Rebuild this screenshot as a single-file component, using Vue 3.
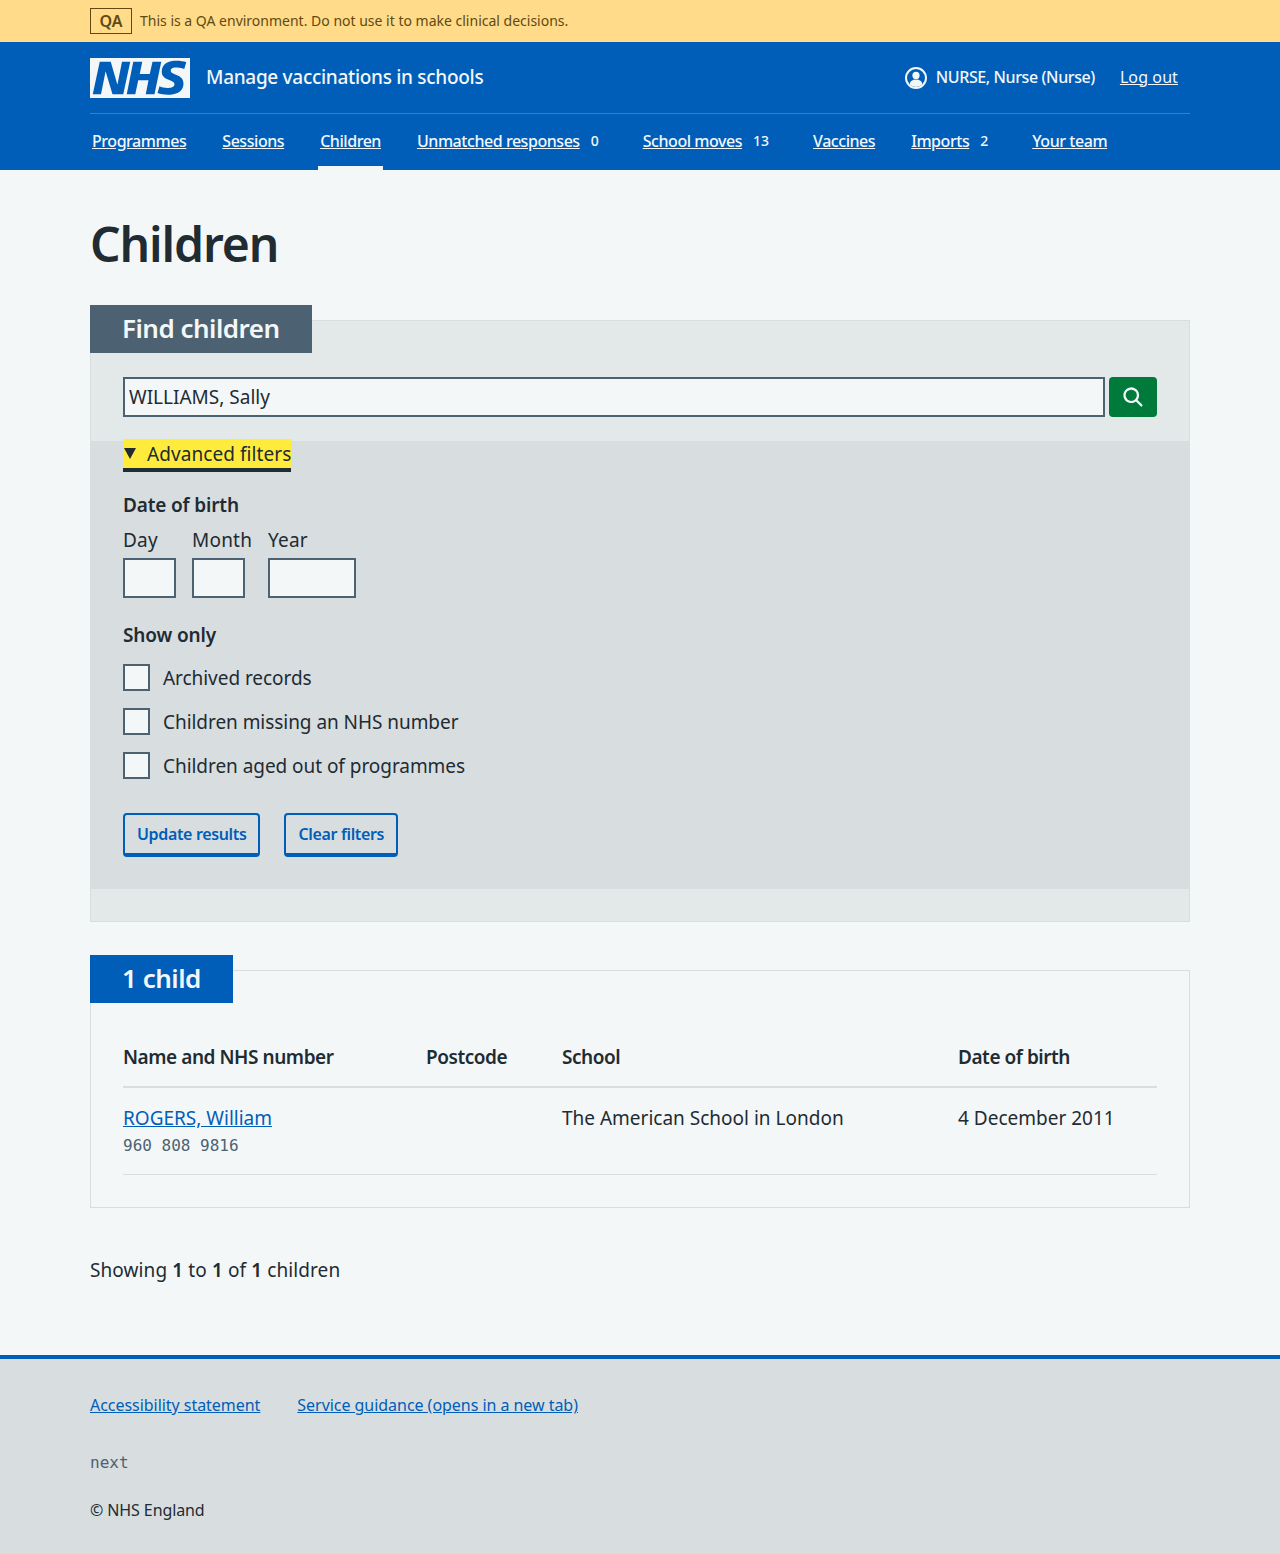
<script setup>
const navItems = [
  { label: 'Programmes' },
  { label: 'Sessions' },
  { label: 'Children', active: true },
  { label: 'Unmatched responses', count: 0 },
  { label: 'School moves', count: 13 },
  { label: 'Vaccines' },
  { label: 'Imports', count: 2 },
  { label: 'Your team' }
]

const dateParts = [
  { label: 'Day', kind: 'short' },
  { label: 'Month', kind: 'short' },
  { label: 'Year', kind: 'long' }
]

const showOnly = [
  'Archived records',
  'Children missing an NHS number',
  'Children aged out of programmes'
]
</script>

<template>
  <div class="page">
    <div class="env-banner">
      <div class="container env-inner">
        <strong class="env-tag">QA</strong>
        <span>This is a QA environment. Do not use it to make clinical decisions.</span>
      </div>
    </div>

    <header class="header">
      <div class="container">
        <div class="header-top">
          <a class="brand" href="#">
            <svg class="logo" viewBox="0 0 40 16" width="100" height="40" aria-label="NHS">
              <path fill="#f4f7f8" d="M0 0h40v16H0z" />
              <path fill="#005eb8" d="M3.9 1.5h4.4l2.6 9h.1l1.8-9h3.3l-2.8 13H9l-2.7-9h-.1l-1.8 9H1.1M17.3 1.5h3.6l-1 4.9h4L25 1.5h3.5l-2.7 13h-3.5l1.1-5.6h-4.1l-1.2 5.6h-3.4M37.7 4.4c-.7-.3-1.6-.6-2.9-.6-1.4 0-2.5.2-2.5 1.3 0 1.8 5.1 1.2 5.1 5.1 0 3.6-3.3 4.5-6.4 4.5-1.3 0-2.9-.3-4-.7l.8-2.7c.7.4 2.1.7 3.2.7s2.8-.2 2.8-1.5c0-2.1-5.1-1.3-5.1-5 0-3.4 2.9-4.4 5.8-4.4 1.6 0 3.1.2 4 .6" />
            </svg>
            <span class="service-name">Manage vaccinations in schools</span>
          </a>
          <div class="account">
            <svg class="account-icon" viewBox="0 0 22 22" width="22" height="22" aria-hidden="true">
              <circle cx="11" cy="11" r="10" fill="none" stroke="#f4f7f8" stroke-width="2" />
              <circle cx="11" cy="8.4" r="3.6" fill="#f4f7f8" />
              <path fill="#f4f7f8" d="M4.6 17.2c.6-3.2 2.7-4.7 6.4-4.7s5.8 1.5 6.4 4.7A9 9 0 0 1 11 20a9 9 0 0 1-6.4-2.8z" />
            </svg>
            <span class="account-name">NURSE, Nurse (Nurse)</span>
            <a class="logout" href="#">Log out</a>
          </div>
        </div>
        <nav class="nav">
          <div
            v-for="item in navItems"
            :key="item.label"
            class="nav-item"
            :class="{ active: item.active }"
          >
            <a href="#">{{ item.label }}</a>
            <span v-if="item.count !== undefined" class="nav-count">{{ item.count }}</span>
          </div>
        </nav>
      </div>
    </header>

    <main class="container main">
      <h1 class="title">Children</h1>

      <section class="card filter-card">
        <h2 class="card-heading filter-heading">Find children</h2>
        <div class="search-row">
          <input class="text-input search-input" type="text" value="WILLIAMS, Sally" />
          <button class="search-btn" type="button" aria-label="Search">
            <svg viewBox="0 0 24 24" width="27" height="27" aria-hidden="true">
              <path fill="#f4f7f8" d="M19.71 18.29l-4.11-4.1a7 7 0 1 0-1.41 1.41l4.1 4.11a1 1 0 0 0 1.42 0 1 1 0 0 0 0-1.42zM5 10a5 5 0 1 1 5 5 5 5 0 0 1-5-5z" />
            </svg>
          </button>
        </div>

        <details class="advanced" open>
          <summary class="advanced-summary">
            <span class="summary-inner">
              <span class="summary-arrow"></span>
              <span class="summary-text">Advanced filters</span>
            </span>
          </summary>
          <div class="advanced-body">
            <div class="field-title">Date of birth</div>
            <div class="date-row">
              <label v-for="part in dateParts" :key="part.label" class="date-part">
                <span class="date-label">{{ part.label }}</span>
                <input class="text-input" :class="part.kind" type="text" />
              </label>
            </div>

            <div class="field-title show-title">Show only</div>
            <div class="checks">
              <label v-for="opt in showOnly" :key="opt" class="check-row">
                <span class="check-box"></span>
                <span class="check-text">{{ opt }}</span>
              </label>
            </div>

            <div class="actions">
              <button class="secondary-btn" type="button">Update results</button>
              <button class="secondary-btn" type="button">Clear filters</button>
            </div>
          </div>
        </details>
      </section>

      <section class="card results-card">
        <h2 class="card-heading results-heading">1 child</h2>
        <table class="table">
          <thead>
            <tr>
              <th class="col-name">Name and NHS number</th>
              <th class="col-postcode">Postcode</th>
              <th class="col-school">School</th>
              <th>Date of birth</th>
            </tr>
          </thead>
          <tbody>
            <tr>
              <td>
                <a class="child-link" href="#">ROGERS, William</a>
                <div class="nhs-number">960 808 9816</div>
              </td>
              <td></td>
              <td>The American School in London</td>
              <td>4 December 2011</td>
            </tr>
          </tbody>
        </table>
      </section>

      <p class="showing">Showing <b>1</b> to <b>1</b> of <b>1</b> children</p>
    </main>

    <footer class="footer">
      <div class="container">
        <div class="footer-links">
          <a href="#">Accessibility statement</a>
          <a href="#">Service guidance (opens in a new tab)</a>
        </div>
        <div class="version">next</div>
        <div class="copyright">© NHS England</div>
      </div>
    </footer>
  </div>
</template>

<style>
html,
body {
  margin: 0;
  background: #f4f7f8;
}
</style>

<style scoped>
.page {
  font-family: "Noto Sans", "Open Sans", sans-serif;
  color: #212b32;
  font-size: 19px;
  line-height: 28px;
  height: 1554px;
  display: flex;
  flex-direction: column;
  background: #f4f7f8;
}

.container {
  width: 1100px;
  margin: 0 auto;
}

.env-banner {
  background: #ffdb8a;
  color: #614a12;
  height: 42px;
  font-size: 14px;
}

.env-inner {
  display: flex;
  align-items: center;
  gap: 8px;
  height: 42px;
}

.env-tag {
  box-sizing: border-box;
  width: 42px;
  height: 26px;
  border: 1px solid #614a12;
  font-size: 16px;
  font-weight: 600;
  line-height: 24px;
  text-align: center;
}

.header {
  background: #005eb8;
  color: #f4f7f8;
  height: 128px;
}

.header a {
  color: #f4f7f8;
}

.header-top {
  display: flex;
  align-items: center;
  justify-content: space-between;
  height: 71px;
  border-bottom: 1px solid #3a7ec7;
}

.brand {
  display: flex;
  align-items: center;
  gap: 16px;
  text-decoration: none;
  height: 72px;
}

.logo {
  display: block;
}

.service-name {
  font-size: 19px;
  font-weight: 500;
  letter-spacing: -0.3px;
  margin-top: -2px;
}

.account {
  display: flex;
  align-items: center;
  font-size: 16px;
  padding-right: 12px;
}

.account-icon {
  margin-right: 9px;
}

.account-name {
  font-weight: 500;
  letter-spacing: -0.4px;
  margin-top: -2px;
}

.logout {
  margin-left: 25px;
  margin-top: -2px;
  letter-spacing: 0.1px;
}

.nav {
  display: flex;
  height: 56px;
  font-size: 16px;
  font-weight: 500;
  letter-spacing: -0.45px;
}

.nav-item {
  display: flex;
  align-items: center;
  padding: 0 2px 2px;
  margin-right: 32px;
  box-sizing: border-box;
  height: 56px;
}

.nav-item.active {
  border-bottom: 4px solid #f4f7f8;
  padding: 2px 2px 0;
}

.nav-count {
  font-size: 14px;
  letter-spacing: 0;
  margin-left: 11px;
  padding-right: 8px;
  font-weight: 500;
}

.main {
  flex: 1;
  padding-top: 46px;
}

.title {
  margin: 0 0 48px;
  font-size: 48px;
  line-height: 56px;
  font-weight: 600;
  letter-spacing: -1.1px;
}

.card {
  border: 1px solid #d8dde0;
  box-sizing: border-box;
}

.filter-card {
  background: #e3e8e8;
  margin-bottom: 48px;
  padding-bottom: 32px;
}

.results-card {
  padding: 0 32px 32px;
}

.card-heading {
  width: fit-content;
  height: 48px;
  box-sizing: border-box;
  margin: -16px 0 0 -1px;
  padding: 0 32px;
  font-size: 26px;
  line-height: 46px;
  font-weight: 600;
  letter-spacing: -0.5px;
  color: #f4f7f8;
}

.filter-heading {
  background: #4c6272;
}

.results-heading {
  background: #005eb8;
  margin-left: -33px;
}

.search-row {
  display: flex;
  gap: 4px;
  padding: 24px 32px;
}

.text-input {
  display: block;
  box-sizing: border-box;
  height: 40px;
  border: 2px solid #4c6272;
  border-radius: 0;
  background: #f4f7f8;
  color: #212b32;
  font: inherit;
  padding: 0 4px;
  margin: 0;
}

.search-input {
  flex: 1;
}

.text-input.short {
  width: 53px;
}

.text-input.long {
  width: 88px;
}

.search-btn {
  width: 48px;
  height: 40px;
  padding: 0;
  border: 0;
  border-radius: 4px;
  background: #007a3a;
  display: flex;
  align-items: center;
  justify-content: center;
}

.advanced {
  background: #d8dde0;
  padding: 0 32px 32px;
}

.advanced-summary {
  list-style: none;
  display: block;
}

.summary-inner {
  display: inline-flex;
  align-items: center;
  box-sizing: border-box;
  height: 33px;
  margin-top: -2px;
  background: #ffeb3b;
  border-bottom: 4px solid #212b32;
  vertical-align: top;
}

.summary-arrow {
  width: 0;
  height: 0;
  margin: 0 11px 0 1px;
  border-left: 6px solid transparent;
  border-right: 6px solid transparent;
  border-top: 11px solid #212b32;
}

.summary-text {
  letter-spacing: 0.07px;
}

.field-title {
  font-weight: 600;
  letter-spacing: -0.15px;
  margin-top: 19px;
}

.date-row {
  display: flex;
  gap: 16px;
  margin-top: 7px;
}

.date-part {
  display: block;
}

.date-label {
  display: block;
  margin-bottom: 4px;
  letter-spacing: 0.2px;
}

.show-title {
  margin-top: 23px;
}

.checks {
  display: flex;
  flex-direction: column;
  gap: 8px;
  margin-top: 10px;
}

.check-row {
  display: flex;
  align-items: center;
  height: 36px;
  gap: 13px;
}

.check-box {
  box-sizing: border-box;
  width: 27px;
  height: 27px;
  border: 2px solid #4c6272;
  background: #f4f7f8;
}

.check-text {
  margin-top: 2px;
  letter-spacing: -0.05px;
}

.actions {
  display: flex;
  gap: 24px;
  margin-top: 30px;
}

.secondary-btn {
  box-sizing: border-box;
  height: 44px;
  padding: 0 12px;
  border: 2px solid #005eb8;
  border-bottom-width: 4px;
  border-radius: 4px;
  background: transparent;
  color: #005eb8;
  font: inherit;
  font-size: 16px;
  font-weight: 600;
  letter-spacing: -0.35px;
}

.table {
  width: 100%;
  border-collapse: collapse;
  margin-top: 24px;
  text-align: left;
}

.table th {
  font-weight: 600;
  letter-spacing: -0.45px;
  padding: 16px 0 15px;
  border-bottom: 2px solid #d8dde0;
}

.table td {
  padding: 16px 0 14px;
  vertical-align: top;
  border-bottom: 1px solid #d8dde0;
}

.col-name {
  width: 303px;
}

.col-postcode {
  width: 136px;
}

.col-school {
  width: 396px;
}

.child-link {
  color: #005eb8;
}

.nhs-number {
  font-family: "DejaVu Sans Mono", monospace;
  font-size: 16px;
  line-height: 28px;
  color: #4c6272;
}

.showing {
  margin: 48px 0 0;
  letter-spacing: 0.1px;
}

.showing b {
  font-weight: 600;
}

.footer {
  background: #d8dde0;
  border-top: 4px solid #005eb8;
  height: 199px;
  box-sizing: border-box;
  padding-top: 34px;
  font-size: 16px;
  line-height: 24px;
}

.footer-links {
  display: flex;
  gap: 37px;
}

.footer-links a {
  color: #005eb8;
  letter-spacing: -0.04px;
}

.version {
  margin-top: 34px;
  font-family: "DejaVu Sans Mono", monospace;
  font-size: 16px;
  color: #4c6272;
}

.copyright {
  margin-top: 23px;
  letter-spacing: -0.1px;
}
</style>
